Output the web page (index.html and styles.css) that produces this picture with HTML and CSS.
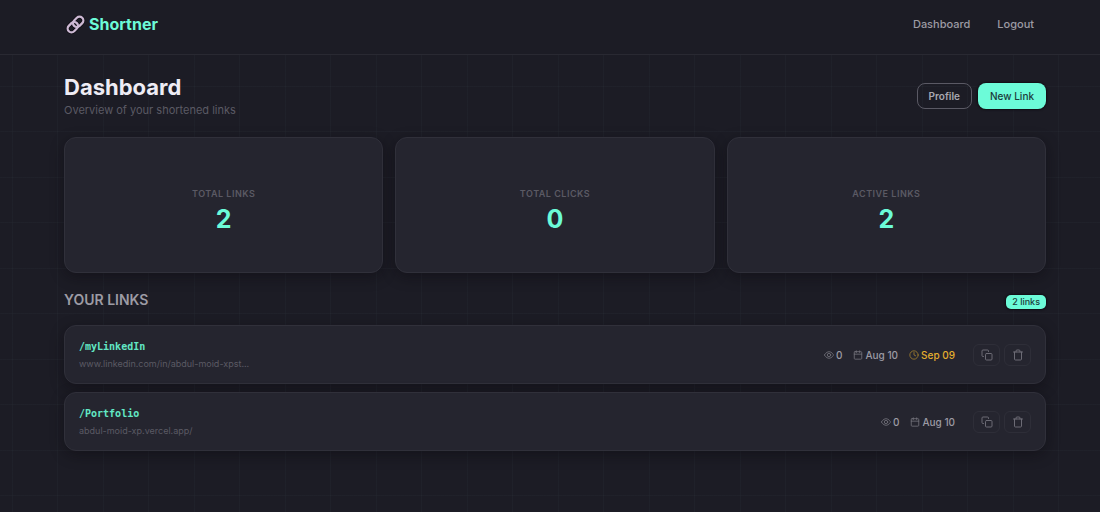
FILE: index.html
```html
<!DOCTYPE html>
<html lang="en">
<head>
<meta charset="utf-8">
<meta name="viewport" content="width=device-width, initial-scale=1">
<title>Shortner – Dashboard</title>
<link rel="stylesheet" href="styles.css">
</head>
<body>
<svg class="sprite" aria-hidden="true">
  <symbol id="eye" viewBox="0 0 24 24"><path d="M1 12s4-8 11-8 11 8 11 8-4 8-11 8S1 12 1 12z"/><circle cx="12" cy="12" r="4"/></symbol>
  <symbol id="calendar" viewBox="0 0 24 24"><rect x="3" y="4" width="18" height="18" rx="2"/><path d="M16 2v4M8 2v4M3 10h18"/></symbol>
  <symbol id="clock" viewBox="0 0 24 24"><circle cx="12" cy="12" r="10"/><path d="M12 6v6l4 2"/></symbol>
  <symbol id="copy" viewBox="0 0 24 24"><rect x="9" y="9" width="13" height="13" rx="2"/><path d="M5 15H4a2 2 0 0 1-2-2V4a2 2 0 0 1 2-2h9a2 2 0 0 1 2 2v1"/></symbol>
  <symbol id="trash" viewBox="0 0 24 24"><path d="M3 6h18M19 6v14a2 2 0 0 1-2 2H7a2 2 0 0 1-2-2V6M8 6V4a2 2 0 0 1 2-2h4a2 2 0 0 1 2 2v2"/></symbol>
</svg>

<header class="navbar">
  <a class="brand" href="#">
    <svg class="brand-icon" viewBox="0 0 20 20" aria-hidden="true">
      <g transform="rotate(-45 10 10)">
        <rect class="link-edge" x="0" y="6" width="12" height="8" rx="4"/>
        <rect class="link-edge" x="8" y="6" width="12" height="8" rx="4"/>
        <rect class="link-ring" x="0" y="6" width="12" height="8" rx="4"/>
        <rect class="link-ring" x="8" y="6" width="12" height="8" rx="4"/>
      </g>
    </svg>
    <span>Shortner</span>
  </a>
  <nav class="nav-links">
    <a href="#">Dashboard</a>
    <a href="#">Logout</a>
  </nav>
</header>

<main class="page">
  <section class="page-head">
    <div>
      <h1 class="title">Dashboard</h1>
      <p class="subtitle">Overview of your shortened links</p>
    </div>
    <div class="actions">
      <button class="btn btn-outline" type="button">Profile</button>
      <button class="btn btn-primary" type="button">New Link</button>
    </div>
  </section>

  <section class="stats">
    <article class="card stat"><span class="stat-label">TOTAL LINKS</span><span class="stat-value">2</span></article>
    <article class="card stat"><span class="stat-label">TOTAL CLICKS</span><span class="stat-value">0</span></article>
    <article class="card stat"><span class="stat-label">ACTIVE LINKS</span><span class="stat-value">2</span></article>
  </section>

  <section>
    <div class="section-head">
      <h2 class="section-title">YOUR LINKS</h2>
      <span class="badge">2 links</span>
    </div>
    <ul class="link-list">
      <li class="card link-row">
        <div class="link-info">
          <a class="slug" href="#">/myLinkedIn</a>
          <span class="url">www.linkedin.com/in/abdul-moid-xpst...</span>
        </div>
        <div class="meta">
          <span class="meta-item"><svg class="icon"><use href="#eye"/></svg>0</span>
          <span class="meta-item"><svg class="icon"><use href="#calendar"/></svg>Aug 10</span>
          <span class="meta-item expiry"><svg class="icon"><use href="#clock"/></svg>Sep 09</span>
        </div>
        <div class="row-actions">
          <button class="icon-btn" type="button" aria-label="Copy /myLinkedIn"><svg class="icon icon-lg"><use href="#copy"/></svg></button>
          <button class="icon-btn" type="button" aria-label="Delete /myLinkedIn"><svg class="icon icon-lg"><use href="#trash"/></svg></button>
        </div>
      </li>
      <li class="card link-row">
        <div class="link-info">
          <a class="slug" href="#">/Portfolio</a>
          <span class="url">abdul-moid-xp.vercel.app/</span>
        </div>
        <div class="meta">
          <span class="meta-item"><svg class="icon"><use href="#eye"/></svg>0</span>
          <span class="meta-item"><svg class="icon"><use href="#calendar"/></svg>Aug 10</span>
        </div>
        <div class="row-actions">
          <button class="icon-btn" type="button" aria-label="Copy /Portfolio"><svg class="icon icon-lg"><use href="#copy"/></svg></button>
          <button class="icon-btn" type="button" aria-label="Delete /Portfolio"><svg class="icon icon-lg"><use href="#trash"/></svg></button>
        </div>
      </li>
    </ul>
  </section>
</main>
</body>
</html>
```

FILE: styles.css
```css
* { box-sizing: border-box; margin: 0; padding: 0; }

:root {
  --bg: #1c1c25;
  --card: #25252f;
  --line: #30303a;
  --grid: rgba(110, 150, 150, 0.04);
  --accent: #6cfbd8;
  --text: #eeecf4;
  --muted: #9c9ba4;
  --dim: #5b5a64;
  --warn: #e3ae2e;
}

body {
  min-height: 100vh;
  color: var(--text);
  font-family: Inter, "Liberation Sans", sans-serif;
  background-color: var(--bg);
  background-image:
    linear-gradient(90deg, transparent 12px, var(--grid) 12px, var(--grid) 13px, transparent 13px, transparent 57px, var(--grid) 57px, var(--grid) 58px, transparent 58px),
    linear-gradient(transparent 40px, var(--grid) 40px, var(--grid) 41px, transparent 41px, transparent 86px, var(--grid) 86px, var(--grid) 87px, transparent 87px);
  background-size: 91px 91px;
}

a { color: inherit; text-decoration: none; }
button { font: inherit; cursor: pointer; }
.sprite { position: absolute; width: 0; height: 0; }

.navbar {
  display: flex;
  align-items: center;
  justify-content: space-between;
  padding: 12px 66px 18px;
  background: var(--bg);
  border-bottom: 1px solid #292932;
}
.brand {
  display: flex;
  align-items: center;
  gap: 4px;
  color: var(--accent);
  font-size: 16px;
  line-height: 24px;
  font-weight: 700;
}
.brand-icon { width: 19px; height: 19px; overflow: visible; fill: none; }
.link-edge { stroke: #0f0d14; stroke-width: 4; }
.link-ring { stroke: #cdb9d4; stroke-width: 2.4; }
.nav-links {
  display: flex;
  gap: 27px;
  color: var(--muted);
  font-size: 11px;
  line-height: 16px;
  font-weight: 500;
}

.page { padding: 18px 54px 60px 64px; }
.page-head {
  display: flex;
  align-items: center;
  justify-content: space-between;
  margin-bottom: 18px;
}
.title { font-size: 22px; line-height: 28px; font-weight: 700; }
.subtitle { color: var(--dim); font-size: 11px; line-height: 18px; }
.actions { display: flex; gap: 6px; }
.btn {
  padding: 0 11px;
  height: 26px;
  border: 1px solid transparent;
  border-radius: 8px;
  font-size: 10px;
  line-height: 22px;
}
.btn-outline { background: transparent; border-color: #5a5964; color: #a9a8b1; font-weight: 600; }
.btn-primary { background: var(--accent); color: #1c3a3a; font-weight: 500; box-shadow: 0 0 2px 1px #100d14; }

.card {
  background: var(--card);
  border: 1px solid var(--line);
  border-radius: 12px;
  box-shadow: 0 4px 14px rgba(10, 8, 12, 0.4);
}
.stats {
  display: grid;
  grid-template-columns: repeat(3, 1fr);
  gap: 12px;
  margin-bottom: 16px;
}
.stat {
  display: flex;
  flex-direction: column;
  align-items: center;
  padding: 48px 16px 36px;
}
.stat-label { color: var(--dim); font-size: 9px; line-height: 16px; font-weight: 600; letter-spacing: 0.5px; }
.stat-value { color: var(--accent); font-size: 25px; line-height: 34px; font-weight: 700; }

.section-head {
  display: flex;
  align-items: center;
  justify-content: space-between;
  margin-bottom: 14px;
}
.section-title { color: var(--muted); font-size: 14px; line-height: 22px; font-weight: 600; }
.badge {
  margin-top: 4px;
  padding: 0 6px;
  border-radius: 5px;
  background: var(--accent);
  color: #1c3a3a;
  font-size: 9px;
  line-height: 14px;
  font-weight: 500;
  box-shadow: 0 0 2px 1px #100d14;
}

.link-list { display: grid; gap: 8px; list-style: none; }
.link-row { display: flex; align-items: center; padding: 12px 14px 11px; }
.link-info { display: flex; flex: 1; flex-direction: column; min-width: 0; }
.slug {
  color: #62e8c5;
  font-family: "DejaVu Sans Mono", monospace;
  font-size: 10px;
  line-height: 18px;
  font-weight: 700;
}
.url { color: var(--dim); font-size: 9px; line-height: 16px; }
.meta { display: flex; gap: 11px; margin-right: 18px; color: var(--muted); font-size: 10px; line-height: 16px; font-weight: 500; }
.meta-item { display: flex; align-items: center; gap: 2px; }
.expiry { color: var(--warn); }
.icon {
  width: 10px;
  height: 10px;
  fill: none;
  stroke: currentColor;
  stroke-width: 2;
  stroke-linecap: round;
  stroke-linejoin: round;
  opacity: 0.65;
}
.icon-lg { width: 12px; height: 12px; opacity: 1; }
.row-actions { display: flex; gap: 4px; }
.icon-btn {
  display: grid;
  place-items: center;
  width: 27px;
  height: 22px;
  border: 1px solid #2e2e38;
  border-radius: 6px;
  background: transparent;
  color: #6c6b75;
}
```
